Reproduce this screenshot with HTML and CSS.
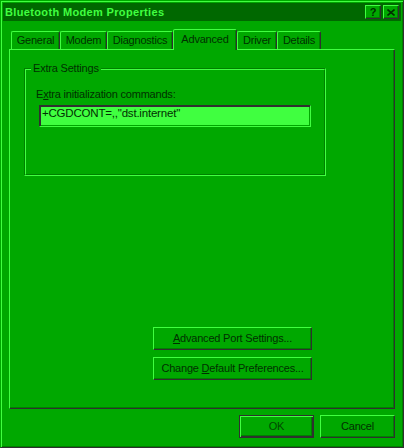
FILE: index.html
```html
<!DOCTYPE html>
<html>
<head>
<meta charset="utf-8">
<title>Bluetooth Modem Properties</title>
<link rel="stylesheet" href="styles.css">
</head>
<body>
<div class="window">
  <div class="titlebar">
    <div class="title">Bluetooth Modem Properties</div>
    <div class="tbtn help">?</div>
    <div class="tbtn close">
      <svg width="8" height="7" viewBox="0 0 8 7"><path d="M0.5 0.5 L7.5 6.5 M7.5 0.5 L0.5 6.5" stroke="#003000" stroke-width="1.6" fill="none"/></svg>
    </div>
  </div>
  <div class="content">
    <div class="tabs">
      <div class="tab w-general">General</div>
      <div class="tab w-modem">Modem</div>
      <div class="tab w-diag">Diagnostics</div>
      <div class="tab sel w-adv">Advanced</div>
      <div class="tab w-driver">Driver</div>
      <div class="tab w-details">Details</div>
    </div>
    <div class="panel">
      <div class="group">
        <div class="group-in">
          <span class="legend">Extra Settings</span>
          <div class="label">E<u>x</u>tra initialization commands:</div>
          <div class="field">+CGDCONT=,,"dst.internet"</div>
        </div>
      </div>
      <div class="btn wide first"><u>A</u>dvanced Port Settings...</div>
      <div class="btn wide second">Change <u>D</u>efault Preferences...</div>
    </div>
    <div class="actions">
      <div class="btn dlg default">OK</div>
      <div class="btn dlg">Cancel</div>
    </div>
  </div>
</div>
</body>
</html>
```
FILE: styles.css
```css
* { box-sizing: border-box; }

body {
  margin: 0;
  background: #00a800;
  font-family: "Liberation Sans", Arial, sans-serif;
  font-size: 11px;
  letter-spacing: -0.2px;
  color: #003000;
}

.window {
  width: 404px;
  height: 448px;
  border: 1px solid;
  border-color: #00a800 #303030 #303030 #00a800;
  box-shadow: inset 1px 1px 0 #40ff40, inset -1px -1px 0 #008000;
  padding: 2px;
  display: flex;
  flex-direction: column;
}

.titlebar {
  height: 18px;
  background: #006800;
  display: flex;
  align-items: center;
  padding: 0 2px 0 2px;
}

.title {
  flex: 1;
  font-weight: bold;
  color: #40ff40;
  font-size: 11px;
  letter-spacing: 0.35px;
  line-height: 18px;
}

.tbtn {
  width: 16px;
  height: 14px;
  background: #00a800;
  border: 1px solid;
  border-color: #40ff40 #303030 #303030 #40ff40;
  box-shadow: inset -1px -1px 0 #008000;
  display: flex;
  align-items: center;
  justify-content: center;
  font-weight: bold;
  font-size: 11px;
  line-height: 12px;
  color: #003000;
}

.tbtn + .tbtn { margin-left: 2px; }

.content {
  padding: 8px 6px 0 6px;
}

.tabs {
  display: flex;
  align-items: flex-end;
  height: 20px;
  padding-left: 2px;
}

.tab {
  height: 18px;
  border: 1px solid;
  border-bottom: none;
  border-color: #40ff40 #303030 transparent #40ff40;
  border-radius: 2px 2px 0 0;
  box-shadow: inset -1px 0 0 #008000;
  line-height: 16px;
  text-align: center;
}

.tab.sel {
  height: 21px;
  margin-bottom: -1px;
  padding-top: 1px;
  position: relative;
  z-index: 1;
  background: #00a800;
}

.w-general { width: 49px; }
.w-modem { width: 47px; }
.w-diag { width: 66px; }
.w-adv { width: 64px; }
.w-driver { width: 40px; }
.w-details { width: 44px; }

.panel {
  height: 360px;
  border: 1px solid;
  border-color: #40ff40 #303030 #303030 #40ff40;
  box-shadow: inset -1px -1px 0 #008000;
  display: flex;
  flex-direction: column;
  align-items: flex-start;
}

.group {
  margin: 18px 0 0 14px;
  width: 302px;
  height: 108px;
  border: 1px solid;
  border-color: #008000 #40ff40 #40ff40 #008000;
}

.group-in {
  height: 100%;
  border: 1px solid;
  border-color: #40ff40 #008000 #008000 #40ff40;
  display: flex;
  flex-direction: column;
  align-items: flex-start;
}

.legend {
  margin: -8px 0 0 5px;
  padding: 0 2px;
  background: #00a800;
  line-height: 13px;
}

.label {
  margin: 13px 0 0 10px;
  line-height: 13px;
}

.field {
  margin: 4px 0 0 13px;
  width: 272px;
  height: 22px;
  background: #40ff40;
  border: 1px solid;
  border-color: #303030 #40ff40 #40ff40 #303030;
  box-shadow: inset 1px 1px 0 #303030, inset -1px -1px 0 #00a800;
  padding: 1px 0 0 2px;
  line-height: 13px;
  white-space: nowrap;
  font-size: 11.5px;
}

.btn {
  height: 23px;
  border: 1px solid;
  border-color: #40ff40 #303030 #303030 #40ff40;
  box-shadow: inset -1px -1px 0 #008000;
  text-align: center;
  line-height: 21px;
}

.wide {
  width: 159px;
  margin-left: 143px;
}

.first { margin-top: 151px; }
.second { margin-top: 7px; }

.actions {
  margin-top: 6px;
  display: flex;
  justify-content: flex-end;
  gap: 6px;
}

.dlg { width: 75px; }

.default {
  border-color: #303030;
  box-shadow: inset 1px 1px 0 #40ff40, inset -1px -1px 0 #303030, inset -2px -2px 0 #008000;
  color: #004800;
}
```
